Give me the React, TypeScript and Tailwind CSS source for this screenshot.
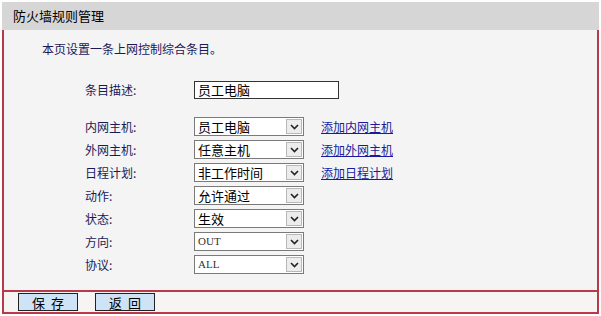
import React from 'react'

const font = { fontFamily: '"Noto Sans CJK SC", "DejaVu Sans", sans-serif' }

function Chevron() {
  return (
    <svg width="9" height="6" viewBox="0 0 9 6">
      <path d="M1 1 L4.5 4.5 L8 1" fill="none" stroke="#222" strokeWidth="1.6" />
    </svg>
  )
}

function Select({ value, mono }: { value: string; mono?: boolean }) {
  return (
    <div className="flex h-[19px] w-[110px] items-stretch border border-[#7a7a7a] bg-white">
      <div
        className={`flex flex-1 items-center pl-[3px] leading-none ${mono ? 'text-[11px] text-[#333]' : 'text-[13px] text-black'}`}
        style={mono ? { fontFamily: '"Liberation Serif", serif' } : undefined}
      >
        {value}
      </div>
      <div className="m-[1px] flex w-[16px] items-center justify-center border border-[#b8b8b8] bg-[#ececec]">
        <Chevron />
      </div>
    </div>
  )
}

const rows: { label: string; value: string; link?: string; mono?: boolean }[] = [
  { label: '内网主机:', value: '员工电脑', link: '添加内网主机' },
  { label: '外网主机:', value: '任意主机', link: '添加外网主机' },
  { label: '日程计划:', value: '非工作时间', link: '添加日程计划' },
  { label: '动作:', value: '允许通过' },
  { label: '状态:', value: '生效' },
  { label: '方向:', value: 'OUT', mono: true },
  { label: '协议:', value: 'ALL', mono: true },
]

export default function App() {
  return (
    <div className="h-[316px] w-[601px] bg-white pt-[2px] text-[12px]" style={font}>
      {/* Header */}
      <div className="mx-[2px] flex h-[28px] items-center bg-[#d6d6d6] pl-[11px] text-[13px] text-black">
        防火墙规则管理
      </div>

      {/* Body */}
      <div className="mx-[2px] border-x-2 border-[#b9394a] bg-[#f4f4f4]">
        <div className="h-[260px] pl-[38px] pt-[11px]">
          <div className="h-[16px] leading-[16px] text-[12px] text-[#1a1a5a]">本页设置一条上网控制综合条目。</div>

          <div className="mt-[23px] flex h-[19px] items-center">
            <div className="w-[152px] pl-[43px] text-[#1a1a5a]">条目描述:</div>
            <div className="flex h-[18px] w-[145px] items-center border border-[#333] bg-white pl-[3px] text-[13px] text-black">
              员工电脑
            </div>
          </div>

          <div className="mt-[18px] flex flex-col gap-[4px]">
            {rows.map((r) => (
              <div key={r.label} className="flex h-[19px] items-center">
                <div className="w-[152px] pl-[43px] text-[#1a1a5a]">{r.label}</div>
                <Select value={r.value} mono={r.mono} />
                {r.link && (
                  <a className="ml-[17px] text-[#1a1aa0] underline" href="#">
                    {r.link}
                  </a>
                )}
              </div>
            ))}
          </div>
        </div>

        {/* Footer */}
        <div className="flex h-[24px] items-center gap-[17px] border-y-2 border-[#b9394a] bg-[#f7f4f4] pl-[14px]">
          <button className="h-[18px] w-[60px] border border-[#222] bg-[#cfe3f7] pl-[6px] text-[13px] leading-none tracking-[6px] text-black">
            保存
          </button>
          <button className="h-[18px] w-[60px] border border-[#222] bg-[#cfe3f7] pl-[6px] text-[13px] leading-none tracking-[6px] text-black">
            返回
          </button>
        </div>
      </div>
    </div>
  )
}
